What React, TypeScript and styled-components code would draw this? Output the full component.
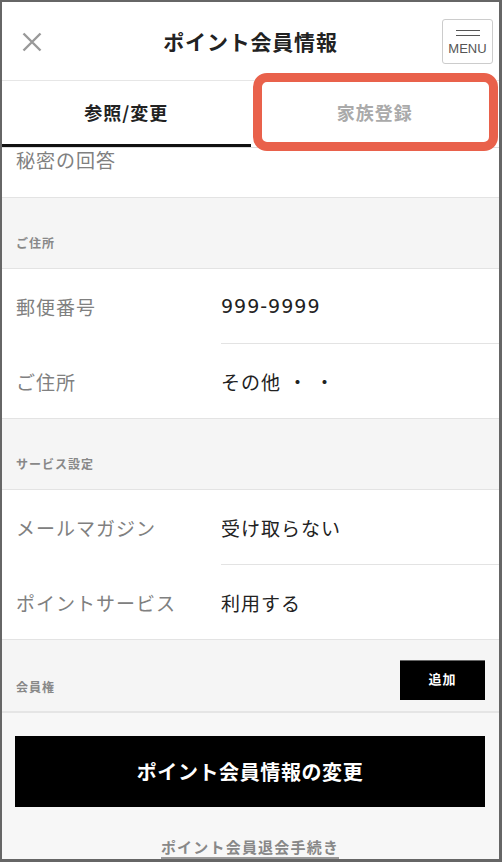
import React from "react";
import styled, { createGlobalStyle } from "styled-components";

const GlobalStyle = createGlobalStyle`
  html, body {
    margin: 0;
    padding: 0;
  }
  body {
    font-family: "Noto Sans CJK JP", "Noto Sans", sans-serif;
    color: #222;
  }
  * {
    box-sizing: border-box;
  }
`;

interface InfoRow {
  label: string;
  value: string;
}

interface InfoGroup {
  title: string;
  rows: InfoRow[];
}

const groups: InfoGroup[] = [
  {
    title: "ご住所",
    rows: [
      { label: "郵便番号", value: "999-9999" },
      { label: "ご住所", value: "その他 ・ ・" },
    ],
  },
  {
    title: "サービス設定",
    rows: [
      { label: "メールマガジン", value: "受け取らない" },
      { label: "ポイントサービス", value: "利用する" },
    ],
  },
];

const App: React.FC = () => {
  const [tab, setTab] = React.useState(0);

  return (
    <>
      <GlobalStyle />
      <Frame>
        <Header>
          <CloseButton aria-label="閉じる">
            <svg width="20" height="20" viewBox="0 0 20 20">
              <path
                d="M1.5 1.5 L18.5 18.5 M18.5 1.5 L1.5 18.5"
                stroke="#999"
                strokeWidth="2.4"
                fill="none"
              />
            </svg>
          </CloseButton>
          <Title>ポイント会員情報</Title>
          <MenuCell>
            <MenuButton>
              <MenuLine />
              <MenuLine />
              <MenuLabel>MENU</MenuLabel>
            </MenuButton>
          </MenuCell>
        </Header>

        <Tabs>
          <Tab $active={tab === 0} onClick={() => setTab(0)}>
            参照/変更
          </Tab>
          <Tab $active={tab === 1} onClick={() => setTab(1)}>
            家族登録
          </Tab>
        </Tabs>

        <Content>
          <ClippedRow>
            <Label>秘密の回答</Label>
          </ClippedRow>

          {groups.map((group) => (
            <React.Fragment key={group.title}>
              <Section>
                <SectionTitle>{group.title}</SectionTitle>
              </Section>
              <Group>
                {group.rows.map((row, i) => (
                  <Row key={row.label}>
                    <Label>{row.label}</Label>
                    <Value $divider={i < group.rows.length - 1}>
                      {row.value}
                    </Value>
                  </Row>
                ))}
              </Group>
            </React.Fragment>
          ))}

          <MemberSection>
            <SectionTitle>会員権</SectionTitle>
            <AddButton>追加</AddButton>
          </MemberSection>

          <Footer>
            <SubmitButton>ポイント会員情報の変更</SubmitButton>
            <WithdrawLink href="#">ポイント会員退会手続き</WithdrawLink>
          </Footer>
        </Content>

        <Highlight />
      </Frame>
    </>
  );
};

const Frame = styled.div`
  position: relative;
  width: 502px;
  height: 862px;
  border-style: solid;
  border-color: #666;
  border-width: 2px 3px 3px 2px;
  background: #f7f7f7;
  overflow: hidden;
  display: flex;
  flex-direction: column;
`;

const Header = styled.header`
  display: grid;
  grid-template-columns: 60px 1fr 60px;
  align-items: center;
  height: 79px;
  background: #fff;
  border-bottom: 1px solid #e6e6e6;
`;

const CloseButton = styled.button`
  display: flex;
  align-items: center;
  padding: 0 0 0 20px;
  margin-top: 2px;
  background: none;
  border: none;
  cursor: pointer;
`;

const Title = styled.h1`
  margin: 0;
  text-align: center;
  font-size: 21px;
  font-weight: 700;
  letter-spacing: 0.8px;
  color: #222;
`;

const MenuCell = styled.div`
  display: flex;
  justify-content: flex-end;
  padding-right: 6px;
`;

const MenuButton = styled.button`
  display: flex;
  flex-direction: column;
  align-items: center;
  width: 51px;
  height: 45px;
  padding: 10px 0 0;
  background: #fff;
  border: 1px solid #ccc;
  border-radius: 3px;
  cursor: pointer;
`;

const MenuLine = styled.span`
  display: block;
  width: 24px;
  height: 1.5px;
  background: #555;
  margin-bottom: 3.5px;
`;

const MenuLabel = styled.span`
  margin-top: 2px;
  font-family: "Liberation Sans", Arial, sans-serif;
  font-size: 13px;
  line-height: 14px;
  color: #555;
`;

const Tabs = styled.nav`
  display: grid;
  grid-template-columns: 1fr 1fr;
  height: 67px;
  background: #fff;
  border-bottom: 1px solid #ddd;
`;

const Tab = styled.button<{ $active: boolean }>`
  display: flex;
  align-items: center;
  justify-content: center;
  padding: 0 0 2px;
  background: #fff;
  border: none;
  border-bottom: 3px solid ${(p) => (p.$active ? "#111" : "transparent")};
  font-family: inherit;
  font-size: 18px;
  font-weight: 700;
  letter-spacing: 1px;
  color: ${(p) => (p.$active ? "#222" : "#aaa")};
  cursor: pointer;
`;

const Content = styled.main`
  display: flex;
  flex-direction: column;
  flex: 1;
`;

const Label = styled.div`
  padding-left: 14px;
  font-size: 19px;
  letter-spacing: 1px;
  color: #808080;
`;

const ClippedRow = styled.div`
  display: flex;
  align-items: flex-start;
  height: 50px;
  background: #fff;
  border-bottom: 1px solid #e3e3e3;
  line-height: 24px;
`;

const Section = styled.div`
  display: flex;
  align-items: flex-end;
  height: 71px;
  padding: 0 14px 15px;
  background: #f5f5f5;
  border-bottom: 1px solid #e3e3e3;
`;

const SectionTitle = styled.div`
  font-size: 12px;
  line-height: 20px;
  font-weight: 700;
  letter-spacing: 1px;
  color: #888;
`;

const Group = styled.div`
  background: #fff;
  border-bottom: 1px solid #e3e3e3;
`;

const Row = styled.div`
  display: grid;
  grid-template-columns: 219px 1fr;
  align-items: stretch;

  & > ${Label} {
    display: flex;
    align-items: center;
  }
`;

const Value = styled.div<{ $divider: boolean }>`
  display: flex;
  align-items: center;
  height: ${(p) => (p.$divider ? "75px" : "74px")};
  border-bottom: ${(p) => (p.$divider ? "1px solid #e3e3e3" : "none")};
  font-family: "DejaVu Sans", "Noto Sans CJK JP", sans-serif;
  font-size: 19px;
  letter-spacing: 1px;
  color: #222;
`;

const MemberSection = styled.div`
  display: flex;
  justify-content: space-between;
  height: 73px;
  padding: 0 14px 0;
  background: #f5f5f5;
  border-bottom: 2px solid #e5e5e5;

  & > ${SectionTitle} {
    align-self: flex-end;
    padding-bottom: 14px;
  }
`;

const AddButton = styled.button`
  align-self: flex-start;
  margin-top: 20px;
  width: 85px;
  height: 40px;
  padding: 0 0 4px;
  background: #000;
  border: none;
  border-top: 1px solid #666;
  font-family: inherit;
  font-size: 13px;
  font-weight: 700;
  letter-spacing: 1px;
  color: #fff;
  cursor: pointer;
`;

const Footer = styled.div`
  display: flex;
  flex-direction: column;
  align-items: center;
  padding: 23px 14px 0 13px;
  background: #f7f7f7;
`;

const SubmitButton = styled.button`
  width: 100%;
  height: 71px;
  background: #000;
  border: none;
  font-family: inherit;
  font-size: 20px;
  font-weight: 700;
  letter-spacing: 0.6px;
  color: #fff;
  cursor: pointer;
`;

const WithdrawLink = styled.a`
  margin-top: 30px;
  padding-bottom: 1px;
  border-bottom: 2px solid #999;
  font-size: 15px;
  line-height: 19px;
  font-weight: 700;
  letter-spacing: 1.2px;
  color: #888;
  text-decoration: none;
`;

const Highlight = styled.div`
  position: absolute;
  top: 71px;
  left: 251px;
  width: 245px;
  height: 78px;
  border: 9px solid #e9614b;
  border-radius: 14px;
  pointer-events: none;
`;

export default App;
